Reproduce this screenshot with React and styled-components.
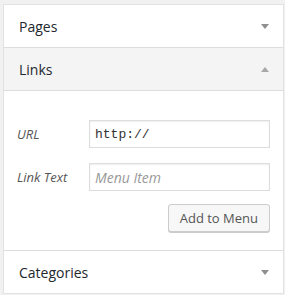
import styled, { createGlobalStyle } from 'styled-components';

const GlobalStyle = createGlobalStyle`
  html, body { margin: 0; padding: 0; background: #f1f1f1; }
  body { font-family: "Open Sans", "Liberation Sans", sans-serif; }
`;

const Page = styled.div`
  padding: 4px 1px 0 3px;
`;

const Accordion = styled.div`
  width: 279px;
  border: 1px solid #e2e2e2;
  background: #fff;
`;

const Section = styled.div`
  & + & { border-top: 1px solid #ddd; }
`;

const Header = styled.div`
  height: 42px;
  display: flex;
  align-items: center;
  justify-content: space-between;
  padding: 0 14px 0 15px;
  font-size: 14px;
  color: #23282d;
  background: ${({ open }) => (open ? '#f4f4f4' : '#fff')};
  border-bottom: ${({ open }) => (open ? '1px solid #ddd' : 'none')};
`;

const Arrow = styled.span`
  width: 0;
  height: 0;
  border-left: 4px solid transparent;
  border-right: 4px solid transparent;
  ${({ up }) => (up ? 'border-bottom: 5px solid #a8a8a8;' : 'border-top: 5px solid #8f8f8f;')}
`;

const Content = styled.div`
  padding: 29px 13px 18px 13px;
  display: flex;
  flex-direction: column;
  gap: 15px;
`;

const Row = styled.label`
  display: flex;
  align-items: center;
`;

const Label = styled.span`
  width: 72px;
  font-size: 13px;
  font-style: italic;
  color: #555;
`;

const Input = styled.input`
  box-sizing: border-box;
  width: 181px;
  height: 28px;
  padding: 0 5px;
  border: 1px solid #ddd;
  box-shadow: inset 0 1px 2px rgba(0, 0, 0, 0.07);
  outline: none;
  font-family: ${({ mono }) => (mono ? '"Liberation Mono", monospace' : '"Open Sans", sans-serif')};
  font-size: ${({ mono }) => (mono ? '13px' : '14px')};
  color: #333;
  &::placeholder { color: #999; font-style: italic; }
`;

const Actions = styled.div`
  display: flex;
  justify-content: flex-end;
  margin-top: -2px;
`;

const Button = styled.button`
  box-sizing: border-box;
  height: 28px;
  padding: 0 11px;
  white-space: nowrap;
  border: 1px solid #ccc;
  border-radius: 3px;
  background: #f7f7f7;
  box-shadow: 0 1px 0 #ccc;
  font-family: "Open Sans", sans-serif;
  font-size: 13px;
  color: #555;
`;

export default function App() {
  return (
    <Page>
      <GlobalStyle />
      <Accordion>
        <Section>
          <Header>Pages<Arrow /></Header>
        </Section>
        <Section>
          <Header open>Links<Arrow up /></Header>
          <Content>
            <Row>
              <Label>URL</Label>
              <Input mono defaultValue="http://" />
            </Row>
            <Row>
              <Label>Link Text</Label>
              <Input placeholder="Menu Item" />
            </Row>
            <Actions>
              <Button>Add to Menu</Button>
            </Actions>
          </Content>
        </Section>
        <Section>
          <Header>Categories<Arrow /></Header>
        </Section>
      </Accordion>
    </Page>
  );
}
